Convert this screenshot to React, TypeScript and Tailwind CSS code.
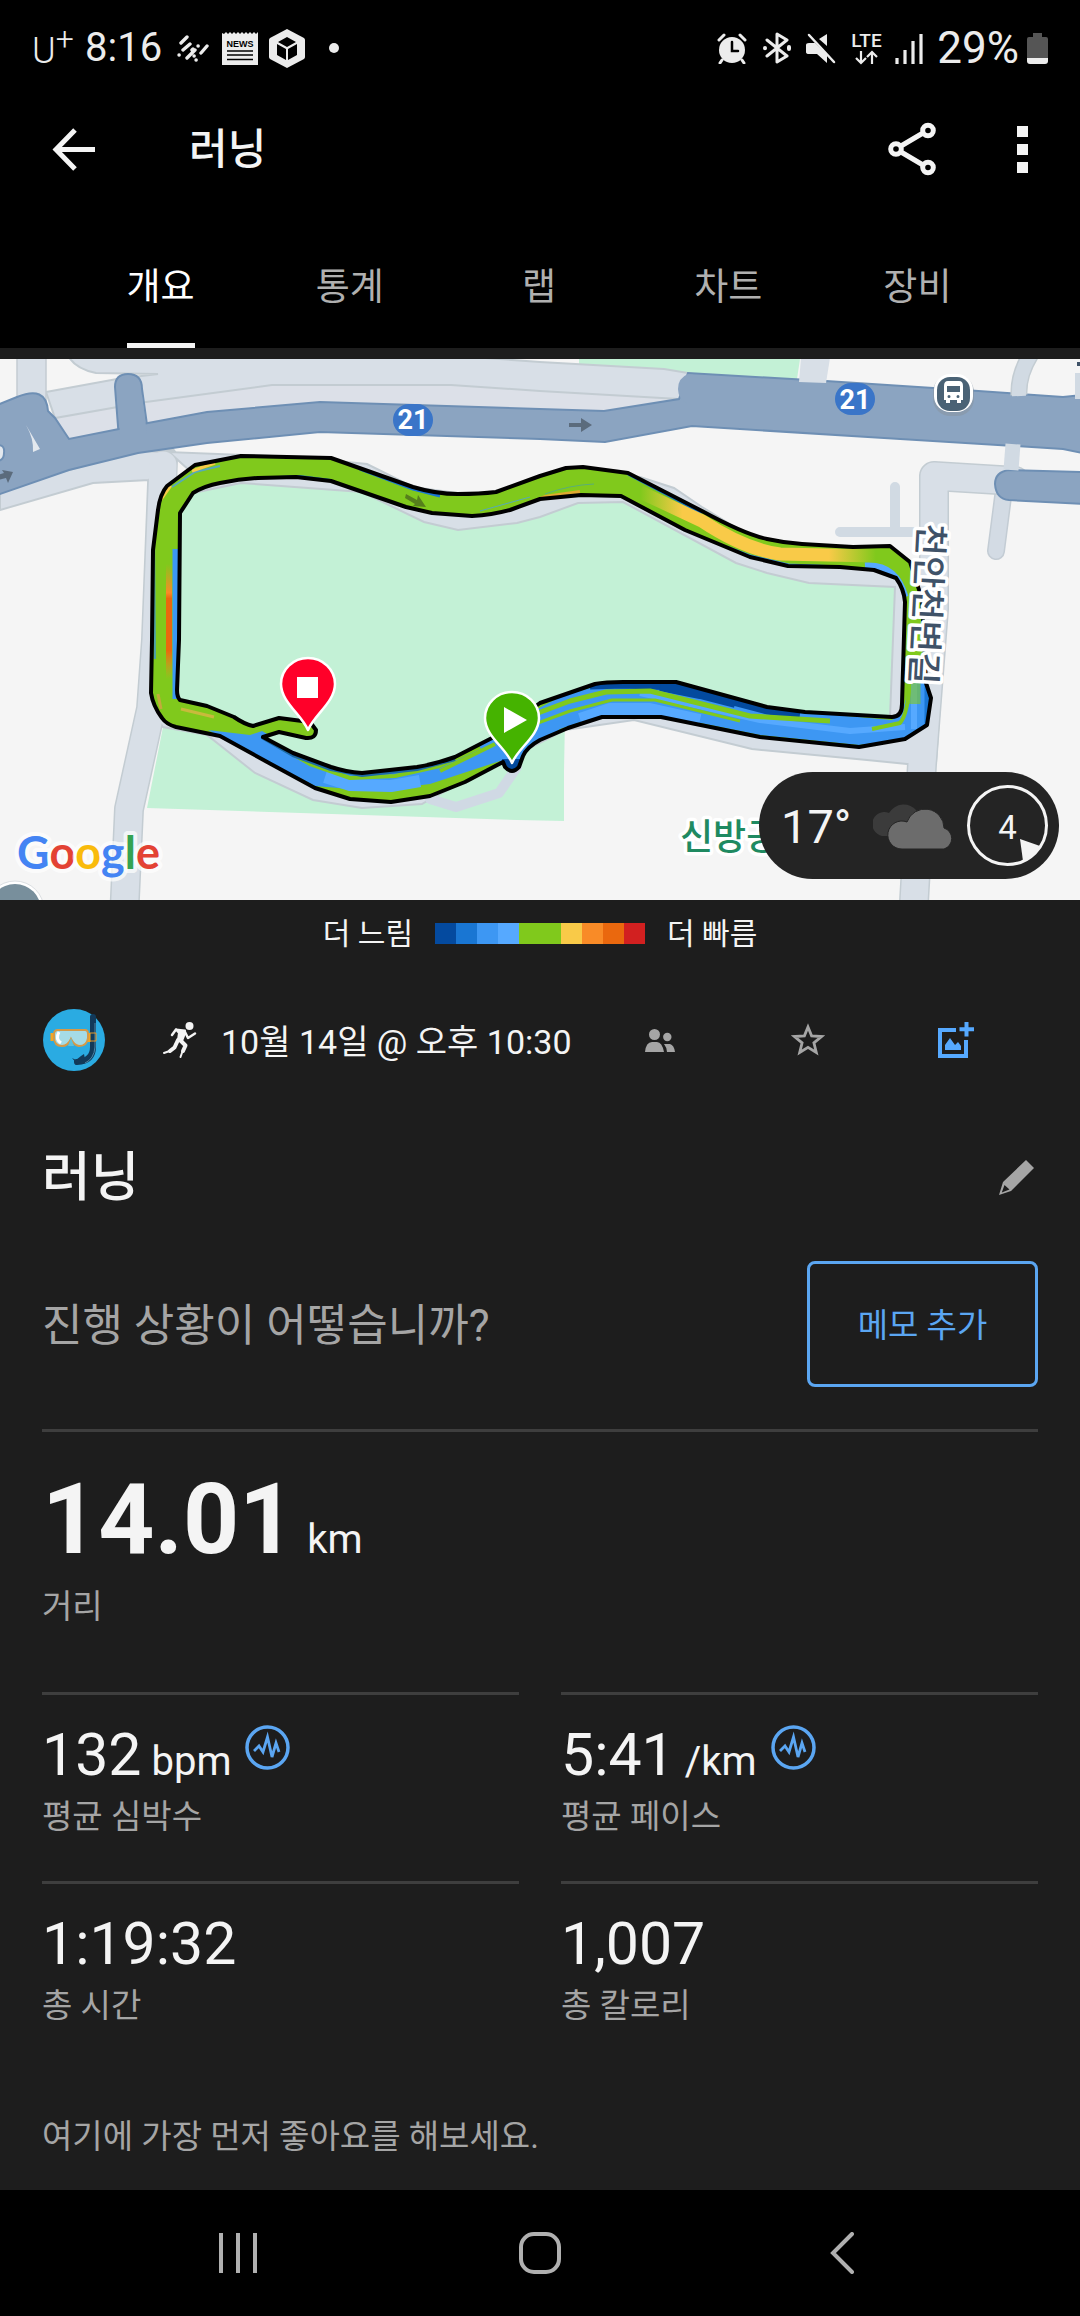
import React, { useState } from 'react';

const tabs = ['개요', '통계', '랩', '차트', '장비'];

const paceColors = [
  'bg-[#044a9f]',
  'bg-[#1976d3]',
  'bg-[#3d97f3]',
  'bg-[#56a9ff]',
  'bg-[#80c91c]',
  'bg-[#80c91c]',
  'bg-[#f9ca48]',
  'bg-[#f98b27]',
  'bg-[#ea680e]',
  'bg-[#d22020]',
];

const stats = [
  { value: '132', unit: 'bpm', label: '평균 심박수', chart: true },
  { value: '5:41', unit: '/km', label: '평균 페이스', chart: true },
  { value: '1:19:32', unit: '', label: '총 시간', chart: false },
  { value: '1,007', unit: '', label: '총 칼로리', chart: false },
];

const TRACK_OUTER =
  'M152 281 L153 191 L158 151 Q160 135 167 127 L195 106 L241 97 L331 99 L365 111 L413 128 Q436 135 458 135 Q480 135 496 133 L540 117 L566 109 L583 108 L628 114 L702 152 Q744 175 767 180 Q785 184 802 185 L853 188 L890 187 L910 203 L922 240 L926 324 L931 339 L927 366 L905 380 L859 388 L760 378 L661 358 L602 358 L568 369 L540 381 Q527 388 523 397 L519 408 Q512 416 505 408 L503 403 L465 423 L430 437 L391 443 L350 440 L315 429 L269 404 L220 377 L176 368 Q166 365 162 359 Q153 347 151 334 Z';

const TRACK_INNER =
  'M179 281 L180 154 L193 134 Q204 127 220 124 Q240 120 258 119 L296 118 L331 122 L406 148 L432 154 L472 157 Q492 156 510 151 L540 140 L581 136 L621 137 L685 171 L750 198 L788 207 L840 208 L874 211 L896 219 Q904 230 905 243 L902 345 Q902 358 892 358 L805 353 L767 348 L676 323 L623 323 Q605 323 595 325 L540 344 L492 379 L455 398 Q436 405 417 408 L362 414 Q346 413 331 408 L293 394 L263 378 L279 373 L306 379 Q316 380 316 371 L310 363 L279 359 L253 367 Q244 365 234 358 L207 347 L180 341 Q177 338 177 331 Z';

const RouteMap = () => (
  <svg viewBox="0 0 1080 541" className="block w-full" role="img" aria-label="러닝 경로 지도">
    <defs>
      <clipPath id="track">
        <path d={`${TRACK_OUTER} ${TRACK_INNER}`} clipRule="evenodd" />
      </clipPath>
      <linearGradient id="fast" gradientUnits="userSpaceOnUse" x1="640" y1="0" x2="876" y2="0">
        <stop offset="0" stopColor="#f9ca48" stopOpacity="0" />
        <stop offset="0.18" stopColor="#f9ca48" />
        <stop offset="0.8" stopColor="#f9ca48" />
        <stop offset="1" stopColor="#f9ca48" stopOpacity="0" />
      </linearGradient>
      <linearGradient id="sprint" gradientUnits="userSpaceOnUse" x1="0" y1="205" x2="0" y2="320">
        <stop offset="0" stopColor="#f98b27" stopOpacity="0" />
        <stop offset="0.25" stopColor="#f98b27" />
        <stop offset="0.3" stopColor="#ea680e" />
        <stop offset="0.75" stopColor="#ea680e" />
        <stop offset="1" stopColor="#f98b27" stopOpacity="0" />
      </linearGradient>
    </defs>
    <rect width="1080" height="541" fill="#f5f5f5" />

    {/* parks */}
    <path d="M579 0H800L797 20 688 15 664 10 579 5Z" fill="#c3f1d6" />
    <path d="M163 368 147 449 517 461 564 462 564 412 565 360 300 350Z" fill="#c3f1d6" />

    {/* side streets */}
    <g fill="none" strokeLinecap="round" strokeLinejoin="round">
      <path d="M895 128V168M840 173H912" stroke="#d1dae3" strokeWidth="10" />
      <path d="M1004 130 996 192" stroke="#c3ccd4" strokeWidth="18" />
      <path d="M1004 130 996 192" stroke="#d3dbe4" strokeWidth="15" />
      <path d="M163 100 156 281 151 350 129 450 124 560" stroke="#c3ccd2" strokeWidth="30" />
      <path d="M1015 122 934 117 934 250 922 405 913 560" stroke="#c3ccd2" strokeWidth="30" />
    </g>
    <path
      d="M0 151 93 124 149 121 200 121 169 93 296 98 367 105 413 128 500 140 582 112 640 118 674 129 702 148 770 190 880 195 947 240 936 404 907 405 867 401 752 390 634 361 565 371 434 438 422 445 362 449 313 441 255 414 207 376 163 368 150 350 156 150 149 121 169 93 138 92 0 130Z"
      fill="#d8dfe7"
      stroke="#c3ccd2"
      strokeWidth="2"
    />
    <g fill="none" strokeLinecap="round" strokeLinejoin="round">
      <path d="M163 106 156 281 151 350 129 450 124 560" stroke="#d8dfe7" strokeWidth="27" />
      <path d="M1015 122 934 117 934 250 922 405 913 560" stroke="#d8dfe7" strokeWidth="27" />
      <path d="M430 440 456 448 499 434 517 408" stroke="#d0d9e4" strokeWidth="10" />
    </g>
    <path
      d="M180 200V154L193 134 241 124 362 133 424 163 458 171 517 164 540 158 578 144 623 143 736 204 767 214 809 224 895 228 890 358 760 352 676 327 610 330 540 360 470 405 380 425 320 418 260 385 178 345Z"
      fill="#c3f1d6"
      stroke="#c3ccd2"
      strokeWidth="2"
    />

    {/* frontage road above the highway */}
    <path d="M46 33 117 20 158 15 96 14Q76 10 69 0H472L540 3 664 10 700 16 690 50 604 52 320 43 207 53 69 80 55 59Z" fill="#dce0e8" />
    <path
      d="M46 33 117 20 158 15 96 14Q76 10 69 -2H472L540 3 664 10 700 16 690 40 679 40 540 32 451 26H272L146 43 55 59Z"
      fill="#d8dfe7"
      stroke="#c3ccd2"
      strokeWidth="2"
    />
    <path d="M17 -2H46V50H17Z" fill="#d8dfe7" stroke="#c3ccd2" strokeWidth="1.5" />

    {/* highway */}
    <g fill="#8ba4c1" stroke="#6e8fb4" strokeWidth="2">
      <path d="M115 28Q115 15 128 15 142 15 142 30L149 80H119Z" />
      <path d="M-3 46 17 38Q46 26 48 52L55 59 69 80 119 70 148 64 207 53 320 43 540 50 604 52 679 40 688 14 826 22 964 31 1063 38 1083 36V94L1063 90 884 79 692 67 605 83 540 80 320 73 207 84 138 94 69 111 -3 136Z" />
      <path d="M1083 113 1009 111Q995 113 995 125 996 140 1009 141L1083 145Z" />
    </g>
    <path d="M688 15Q678 19 678 30 678 40 688 45H700V17Z" fill="#8ba4c1" />
    <path d="M117 36 142 36 147 75H120Z" fill="#8ba4c1" />
    <path d="M26 66 40 90 33 93Q34 80 26 66Z" fill="#e3e8ee" />
    <path d="M-2 86Q5 86 4 94 4 101 -2 102" fill="#e3e8ee" stroke="#6e8fb4" strokeWidth="2" />
    <path d="M801 -1H830L826 24 799 23Z" fill="#d8dfe7" />
    <path d="M1033 -8Q1018 14 1019 36" fill="none" stroke="#c3ccd2" strokeWidth="17" />
    <path d="M1033 -8Q1018 14 1019 37" fill="none" stroke="#d1dae3" strokeWidth="14" />
    <path d="M1013 85 1011 111" stroke="#d1dae3" strokeWidth="15" />
    <path d="M1075 14H1080V40H1075Z" fill="#d1dae3" />
    <path d="M1077 3H1080V7H1077Z" fill="#3f5268" />

    <path d="M569 64H581V59L592 66 581 73V68H569Z" fill="#5b6b7c" />
    <path d="M-2 116 4 114 2 111 13 113 8 124 6 119 -2 121Z" fill="#5b6b7c" />

    {/* road shields */}
    <g fontFamily="Roboto, sans-serif" fontSize="27" fontWeight="700" fill="#fff" textAnchor="middle">
      <rect x="393" y="45" width="40" height="32" rx="16" fill="#3a75c8" />
      <text x="413" y="70">21</text>
      <rect x="835" y="24" width="40" height="32" rx="16" fill="#3a75c8" />
      <text x="855" y="50">21</text>
    </g>

    {/* bus stop */}
    <rect x="933" y="16" width="41" height="41" rx="17" fill="#8896a3" opacity="0.6" />
    <rect x="934" y="15" width="39" height="38" rx="16" fill="#fff" />
    <rect x="937" y="18" width="33" height="34" rx="13" fill="#4a6275" />
    <path
      d="M948 22H959Q963 22 963 27V41H961V44H957V41H950V44H946V41H944V27Q944 22 948 22ZM947 27V33H960V27ZM949 36A1.5 1.5 0 1 0 949 39 1.5 1.5 0 1 0 949 36ZM958 36A1.5 1.5 0 1 0 958 39 1.5 1.5 0 1 0 958 36Z"
      fill="#fff"
      fillRule="evenodd"
    />

    {/* running track coloured by pace */}
    <path d={`${TRACK_OUTER} ${TRACK_INNER}`} fill="#80c91c" fillRule="evenodd" />
    <g clipPath="url(#track)" fill="none" strokeLinejoin="round">
      <path d="M176 190V340" stroke="#3d97f3" strokeWidth="7" />
      <path d="M154 170 155 300" stroke="#4da0a8" strokeWidth="2" />
      <path d="M169 205V320" stroke="url(#sprint)" strokeWidth="6" />
      <path d="M158 335 161 350" stroke="#c2ab3c" strokeWidth="3" />
      <path d="M160 140 170 126" stroke="#f9ca48" strokeWidth="5" />
      <path d="M172 128 195 113 220 107" stroke="#56a9b8" strokeWidth="2" />
      <path d="M192 112 215 104" stroke="#f9ca48" strokeWidth="3" />
      <path d="M258 120 300 118 331 122" stroke="#2b86a8" strokeWidth="4" />
      <path d="M360 110 413 130 440 137" stroke="#1976d3" strokeWidth="3" />
      <path d="M480 152 530 138" stroke="#56a9b8" strokeWidth="1" />
      <path d="M515 150 545 138 580 133" stroke="#e0a92f" strokeWidth="4" />
      <path d="M545 135Q570 126 594 125" stroke="#5aae78" strokeWidth="1" />
      <path d="M628 115 702 154" stroke="#1976d3" strokeWidth="3" />
      <path d="M640 133 702 162Q744 190 780 195L876 197" stroke="url(#fast)" strokeWidth="13" />
      <path d="M726 190 750 199 788 208 840 210" stroke="#3d97f3" strokeWidth="7" />
      <path d="M865 207Q896 205 905 238" stroke="#56a9ff" strokeWidth="7" />
      <path d="M181 350 214 358" stroke="#c8ba3c" strokeWidth="3" />
      <path
        d="M208 371 250 376 262 372 300 394 331 405 362 410 417 405 492 374 560 338 600 326 660 325 700 330 767 350 892 361 903 350 912 320 928 325 930 366 905 380 859 386 760 376 661 356 602 356 560 370 512 412 500 402 430 425 391 430 350 430 315 427Z"
        fill="#3d97f3"
      />
      <path d="M325 418 350 426 391 427 420 422" stroke="#56a9ff" strokeWidth="12" />
      <path d="M320 437 350 442 391 444 440 434" stroke="#80c91c" strokeWidth="10" />
      <path d="M280 388 310 405 350 419 395 417 440 407 480 388" stroke="#80c91c" strokeWidth="4" />
      <path d="M262 378 293 396 331 410 362 416 417 410 455 400" stroke="#1c6aa6" strokeWidth="4" />
      <path d="M440 412 495 385" stroke="#80c91c" strokeWidth="4" />
      <path d="M580 360 610 350 650 350 700 361" stroke="#56a9ff" strokeWidth="12" />
      <path d="M640 334 690 345 760 361 850 372 905 368" stroke="#56a9ff" strokeWidth="6" />
      <path d="M590 326 623 325 676 327 767 351 800 355" stroke="#034a9e" strokeWidth="9" />
      <path d="M660 328 700 336 735 345" stroke="#034a9e" strokeWidth="8" />
      <path d="M538 354 570 342 606 333 650 332 690 342 750 357 830 362" stroke="#80c91c" strokeWidth="5" />
      <path d="M538 364 570 352 612 341 655 341 740 362" stroke="#80c91c" strokeWidth="3" />
      <path d="M872 370 900 364Q908 355 910 320" stroke="#80c91c" strokeWidth="4" />
      <path d="M914 318V370" stroke="#56a9ff" strokeWidth="6" />
      <path d="M914 315V345" stroke="#80c91c" strokeWidth="13" opacity="0.6" />
      <path d="M928 318V370" stroke="#1976d3" strokeWidth="7" />
      <path d="M512 400V420" stroke="#034a9e" strokeWidth="20" />
    </g>
    <path d={TRACK_OUTER} fill="none" stroke="#000" strokeWidth="4" strokeLinejoin="round" />
    <path d={TRACK_INNER} fill="none" stroke="#000" strokeWidth="4" strokeLinejoin="round" />
    <path d="M406 135 417 141 418 136 426 148 413 147 415 145 405 139Z" fill="#567f1c" />

    {/* place labels */}
    <g fontFamily="'Noto Sans CJK KR', sans-serif" fontWeight="500" stroke="#fff" strokeWidth="7" strokeLinejoin="round" paintOrder="stroke">
      <text fontSize="35" fill="#3f5268" transform="translate(919 164) rotate(93)">천안천변길</text>
      <text fontSize="36" fill="#1f8a61" x="680" y="491">신방공</text>
    </g>

    {/* finish and start pins */}
    <g stroke="#fff" strokeWidth="2.5" strokeLinejoin="round">
      <path d="M308 371C302 356 281 343 281 325A27 26 0 0 1 335 325C335 343 314 356 308 371Z" fill="#ff0029" />
      <path d="M512 404C506 389 485 377 485 359A27 26 0 0 1 539 359C539 377 518 389 512 404Z" fill="#45b300" />
    </g>
    <path d="M297 318H318V339H297ZM504 348 527 361 504 374Z" fill="#fff" />

    <circle cx="15" cy="551" r="29" fill="#fff" stroke="#dcdfe2" strokeWidth="1" />
    <circle cx="15" cy="551" r="26" fill="#788f9c" />
    <text
      x="17"
      y="510"
      fontFamily="Lato, sans-serif"
      fontSize="45"
      fontWeight="700"
      stroke="#fff"
      strokeOpacity="0.7"
      strokeWidth="8"
      strokeLinejoin="round"
      paintOrder="stroke"
    >
      <tspan fill="#4484f3">G</tspan>
      <tspan fill="#e34234">o</tspan>
      <tspan fill="#f9bb0c">o</tspan>
      <tspan fill="#4484f3">g</tspan>
      <tspan fill="#34a352">l</tspan>
      <tspan fill="#e34234">e</tspan>
    </text>
  </svg>
);

const WeatherPill = () => (
  <div className="absolute right-[21px] bottom-[21px] flex h-[107px] w-[300px] items-center rounded-full bg-[#242424] pl-[22px] text-[#f4f4f4]">
    <span className="w-[92px] pt-1 text-[47px]">17°</span>
    <svg width="82" height="47" viewBox="0 0 82 47">
      <path d="M12 34A12 12 0 1 1 16 11 17 17 0 0 1 44 9L30 34Z" fill="#3b3b3b" />
      <path d="M29 47A14 14 0 1 1 34 20 19 19 0 0 1 71 26 11 11 0 0 1 71 47Z" fill="#6c6c6c" stroke="#242424" strokeWidth="1" />
    </svg>
    <div className="relative ml-3 flex h-[81px] w-[81px] items-center justify-center rounded-full border-[3px] border-[#f4f4f4] pt-1 text-[33px]">
      4
      <svg className="absolute right-[5px] bottom-[2px]" width="20" height="22" viewBox="0 0 20 22">
        <path d="M0 0 20 7Q14 18 3 22Z" fill="#f4f4f4" />
      </svg>
    </div>
  </div>
);

const StatusBar = () => (
  <div className="flex h-24 items-center pr-[32px] pl-[32px] text-[#ececec]">
    <span className="flex w-[53px] items-start pt-[5px] text-[36px] leading-[36px] font-light">
      U<span className="text-[32px] leading-[12px]">+</span>
    </span>
    <span className="w-[92px] text-[40px]">8:16</span>
    <svg width="32" height="27" viewBox="0 0 32 27" stroke="currentColor" strokeWidth="3.4" strokeLinecap="round">
      <path d="M4 8 10 2M6 15 13 9M10 23 18 15M15 15 16 14M24 18 30 11M2 20 2.2 20M17 21 17.2 21M21 11 21.2 11M19 25 19.2 25" />
    </svg>
    <svg className="ml-[13px]" width="36" height="33" viewBox="0 0 36 33">
      <path d="M0 1 2 2 4 0 6 2 8 0 10 2 12 0 14 2 16 0 18 2 20 0 22 2 24 0 26 2 28 0 30 2 32 0 34 2 36 0V33H0Z" fill="currentColor" />
      <path d="M5 19H31M5 23H31M5 27.500H31" stroke="#000" strokeWidth="1.5" />
      <text x="18" y="15" fontFamily="'Liberation Sans'" fontSize="9" fontWeight="700" textAnchor="middle">NEWS</text>
    </svg>
    <svg className="ml-[11px]" width="36" height="39" viewBox="0 0 36 39">
      <path d="M18 0 35 9Q36 10 36 11V28Q36 29 35 30L18 39 1 30Q0 29 0 28V11Q0 10 1 9Z" fill="currentColor" />
      <path d="M18 8 27 13 18 18 9 13ZM8 15 17 20V31L8 26ZM28 15 19 20V31L28 26Z" fill="#000" />
    </svg>
    <span className="ml-6 h-[10px] w-[10px] rounded-full bg-[#ececec]" />

    <svg className="ml-auto" width="30" height="31" viewBox="0 0 30 31" fill="none" stroke="currentColor" strokeLinecap="round">
      <circle cx="15" cy="17" r="13" fill="currentColor" stroke="none" />
      <path d="M2 7 7 2M28 7 23 2M5 27 3 30M25 27 27 30" strokeWidth="3" />
      <path d="M15 9V18H21" stroke="#000" strokeWidth="2.5" />
    </svg>
    <svg className="ml-4" width="28" height="32" viewBox="0 0 28 32" fill="none" stroke="currentColor" strokeWidth="3" strokeLinecap="round" strokeLinejoin="round">
      <path d="M4 8 24 24 14 30V2L24 8 4 24" />
      <path d="M2 16V16.200M26 15V17" strokeWidth="4" />
    </svg>
    <svg className="ml-[15px]" width="30" height="31" viewBox="0 0 30 31">
      <path d="M0 12Q0 10 3 10H9L21 22V30L11 21H3Q0 21 0 19ZM21 1V13L13 6Z" fill="currentColor" />
      <path d="M3 2 28 29" stroke="currentColor" strokeWidth="2.500" strokeLinecap="round" />
    </svg>
    <svg className="ml-[13px]" width="35" height="41" viewBox="-2 -4 35 41" fill="none" stroke="currentColor" strokeWidth="2.200">
      <text x="15.500" y="15" fontFamily="Roboto" fontSize="19" fontWeight="500" textAnchor="middle" fill="currentColor" stroke="none">LTE</text>
      <path d="M10 19V31M5 26 10 31 15 26M21 32V20M16 25 21 20 26 25" />
    </svg>
    <svg className="ml-[11px]" width="28" height="31" viewBox="0 0 28 31" stroke="currentColor" strokeWidth="3.200">
      <path d="M2 25V31M10 17V31M18 8V31M26 1V31" />
    </svg>
    <span className="ml-[14px] text-[44px]">29%</span>
    <svg className="ml-2" width="21" height="31" viewBox="0 0 21 31">
      <path d="M6 0H15V4H19Q21 4 21 6V26H0V6Q0 4 2 4H6Z" fill="#555" />
      <path d="M0 25H21V28Q21 31 18 31H3Q0 31 0 28Z" fill="#ececec" />
    </svg>
  </div>
);

const ChartBadge = () => (
  <svg width="45" height="45" viewBox="0 0 45 45" fill="none" stroke="#5ba6f2">
    <circle cx="22.5" cy="22.5" r="20.500" strokeWidth="3.500" />
    <path d="M9 26 14 21 18 27 22.5 12 27 32 31 18 34 27" strokeWidth="2.800" />
  </svg>
);

export default function App() {
  const [active, setActive] = useState('개요');
  const [starred, setStarred] = useState(false);

  return (
    <div lang="ko" className="min-h-screen bg-[#1d1d1d] font-['Roboto','Noto_Sans_CJK_KR',sans-serif] text-[#f4f4f4]">
      <header className="bg-black">
        <StatusBar />
        <div className="flex h-[106px] items-center pr-[52px] pl-[52px]">
          <button aria-label="뒤로">
            <svg width="43" height="43" viewBox="0 0 43 43" fill="none" stroke="currentColor" strokeWidth="5">
              <path d="M23 2 4 21.500 23 41M4 21.500H43" />
            </svg>
          </button>
          <h1 className="ml-[94px] text-[42px] font-medium">러닝</h1>
          <button aria-label="공유" className="ml-auto">
            <svg width="48" height="54" viewBox="0 0 48 54" fill="none" stroke="currentColor" strokeWidth="5">
              <circle cx="8" cy="27" r="5.300" />
              <circle cx="40" cy="8.500" r="5.300" />
              <circle cx="40" cy="45.500" r="5.300" />
              <path d="M13 24 35 11M13 30 35 43" />
            </svg>
          </button>
          <button aria-label="더보기" className="ml-[81px] flex flex-col gap-[7px]">
            <span className="h-[11px] w-[11px] bg-[#f4f4f4]" />
            <span className="h-[11px] w-[11px] bg-[#f4f4f4]" />
            <span className="h-[11px] w-[11px] bg-[#f4f4f4]" />
          </button>
        </div>
        <nav className="grid h-[146px] grid-cols-5 pr-[68px] pl-[66px]">
          {tabs.map(tab => (
            <button key={tab} onClick={() => setActive(tab)} className="flex justify-center text-[37px]">
              <span
                className={`flex h-full items-center border-b-[5px] pt-[31px] ${
                  active === tab ? 'border-[#f4f4f4] text-white' : 'border-transparent text-[#b0b0b0]'
                }`}
              >
                {tab}
              </span>
            </button>
          ))}
        </nav>
      </header>

      <main>
        <div className="relative mt-[11px]">
          <RouteMap />
          <WeatherPill />
        </div>

        <div className="flex h-[67px] items-center justify-center gap-[22px] text-[30px]">
          <span>더 느림</span>
          <div className="flex">
            {paceColors.map((color, i) => (
              <span key={i} className={`h-[21px] w-[21px] ${color}`} />
            ))}
          </div>
          <span>더 빠름</span>
        </div>

        <div className="flex h-[146px] items-center pr-[50px] pl-[43px]">
          <svg width="62" height="62" viewBox="0 0 62 62">
            <circle cx="31" cy="31" r="31" fill="#2aabe2" />
            <path d="M50 8V38Q50 52 34 53" fill="none" stroke="#123a5a" strokeWidth="6" strokeLinecap="round" />
            <path d="M52 14V38Q51 50 42 54" fill="none" stroke="#4c86a8" strokeWidth="1" />
            <path d="M29 49 33 51 38 47 41 45 42 50 34 55Z" fill="#123a5a" />
            <path d="M9 24V32M46 24V33" stroke="#f5a623" strokeWidth="3" />
            <path d="M47 24H53V32H47" fill="none" stroke="#e59a2c" strokeWidth="1" />
            <path d="M15 21H42Q45 21 45 25V29Q44 37 36 37 31 36 28 30 25 37 19 37 11 37 11 28V25Q11 21 15 21Z" fill="#a5dbe6" stroke="#d59a48" strokeWidth="2" />
            <path d="M16 23Q12 30 18 34" fill="none" stroke="#fff" strokeWidth="3" />
            <path d="M28 29 31 37H25Z" fill="#5cc0dc" />
          </svg>
          <svg className="ml-[58px]" width="34" height="36" viewBox="0 0 34 36" fill="none" stroke="currentColor" strokeLinecap="round" strokeLinejoin="round">
            <circle cx="26.500" cy="4" r="4" fill="currentColor" stroke="none" />
            <path d="M13 7.500 22 8.500 21 14 19 19 15 18 16 11Z" fill="currentColor" strokeWidth="2" />
            <path d="M9 13 13 7.500M22 10 25 16 32 11.500" strokeWidth="2.500" />
            <path d="M15 18 11.500 25.500 7 29M17 18 22.500 23.500 20 29" strokeWidth="4" />
            <path d="M8 28.500 1 31M20 28 17.500 35" strokeWidth="2" />
          </svg>
          <span className="ml-[24px] pt-1 text-[34px]">10월 14일 @ 오후 10:30</span>
          <div className="ml-auto flex items-center text-[#a5a5a5]">
            <button aria-label="공개 범위" className="flex w-[148px] justify-center">
              <svg width="30" height="23" viewBox="0 0 30 23" fill="currentColor">
                <circle cx="9.500" cy="5.500" r="5.500" />
                <circle cx="22.300" cy="8" r="4.200" />
                <path d="M0 23Q1 13 7 13H12Q17 13 19 23ZM19 15H25Q29 16 30 23H22Q21.500 18 19 15Z" />
              </svg>
            </button>
            <button aria-label="즐겨찾기" className="flex w-[148px] justify-center" onClick={() => setStarred(!starred)}>
              <svg width="34" height="34" viewBox="0 0 34 34" fill={starred ? 'currentColor' : 'none'} stroke="currentColor" strokeWidth="2.800">
                <path d="M17 4 20.600 12.800 30.500 13.500 22.900 19.800 25.300 29.500 17 24.300 8.700 29.500 11.100 19.800 3.500 13.500 13.400 12.800Z" />
              </svg>
            </button>
            <button aria-label="사진 추가" className="flex w-[148px] justify-center text-[#56a9ff]">
              <svg width="36" height="36" viewBox="0 0 36 36" fill="none" stroke="currentColor" strokeWidth="4">
                <path d="M18 8H2V34H28V18" />
                <path d="M28.500 0V14.500M21.500 7.300H36" />
                <path d="M7 28V23L12 16 17 23 20 20 23 24V28Z" fill="currentColor" stroke="none" />
              </svg>
            </button>
          </div>
        </div>

        <div className="flex h-32 items-center justify-between px-[42px]">
          <h2 className="pt-1 text-[53px] font-medium">러닝</h2>
          <button aria-label="이름 편집" className="pr-1 text-[#a5a5a5]">
            <svg width="35" height="35" viewBox="0 0 35 35" fill="currentColor">
              <path d="M27 0 35 8 12 31 0 35 4 22ZM5.500 25 2.800 32.500 10.500 29.500Z" fillRule="evenodd" />
            </svg>
          </button>
        </div>

        <section className="px-[42px]">
          <div className="flex items-center justify-between pt-5 pb-[42px]">
            <p className="pt-1 text-[44px] text-[#a5a5a5]">진행 상황이 어떻습니까?</p>
            <button className="h-[126px] w-[231px] rounded-lg border-[3px] border-[#5ba6f2] pt-1 text-[33px] text-[#5ba6f2]">메모 추가</button>
          </div>

          <div className="border-t-[3px] border-[#3e3e3e] pt-[39px] pb-[61px]">
            <p className="flex items-baseline gap-3">
              <span className="text-[98px] leading-[98px] font-bold">14.01</span>
              <span className="text-[40px] leading-[40px]">km</span>
            </p>
            <p className="mt-[14px] text-[33px] leading-[48px] text-[#a5a5a5]">거리</p>
          </div>

          <div className="grid grid-cols-2 gap-x-[42px]">
            {stats.map(stat => (
              <div key={stat.label} className="border-t-[3px] border-[#3e3e3e] pt-[30px] pb-[40px]">
                <div className="flex h-[60px] items-start">
                  <p className="flex items-baseline gap-[10px]">
                    <span className="text-[59px] leading-[60px]">{stat.value}</span>
                    {stat.unit && <span className="text-[40px] leading-[40px]">{stat.unit}</span>}
                  </p>
                  {stat.chart && (
                    <button aria-label={`${stat.label} 차트`} className="ml-[14px]">
                      <ChartBadge />
                    </button>
                  )}
                </div>
                <p className="mt-2 text-[33px] leading-[48px] text-[#a5a5a5]">{stat.label}</p>
              </div>
            ))}
          </div>

          <p className="flex h-[120px] items-center pt-[14px] text-[33px] text-[#a5a5a5]">여기에 가장 먼저 좋아요를 해보세요.</p>
        </section>
      </main>

      <footer className="grid h-[126px] grid-cols-3 items-center justify-items-center bg-black px-[87px] text-[#b0b0b0]">
        <button aria-label="최근 앱">
          <svg width="38" height="40" viewBox="0 0 38 40" stroke="currentColor" strokeWidth="4">
            <path d="M2 0V40M19 0V40M36 0V40" />
          </svg>
        </button>
        <button aria-label="홈">
          <svg width="42" height="42" viewBox="0 0 42 42" fill="none" stroke="currentColor" strokeWidth="4">
            <rect x="2" y="2" width="38" height="38" rx="13" />
          </svg>
        </button>
        <button aria-label="뒤로 가기">
          <svg width="24" height="42" viewBox="0 0 24 42" fill="none" stroke="currentColor" strokeWidth="4" strokeLinecap="round">
            <path d="M22 2 3 21 22 40" />
          </svg>
        </button>
      </footer>
    </div>
  );
}
